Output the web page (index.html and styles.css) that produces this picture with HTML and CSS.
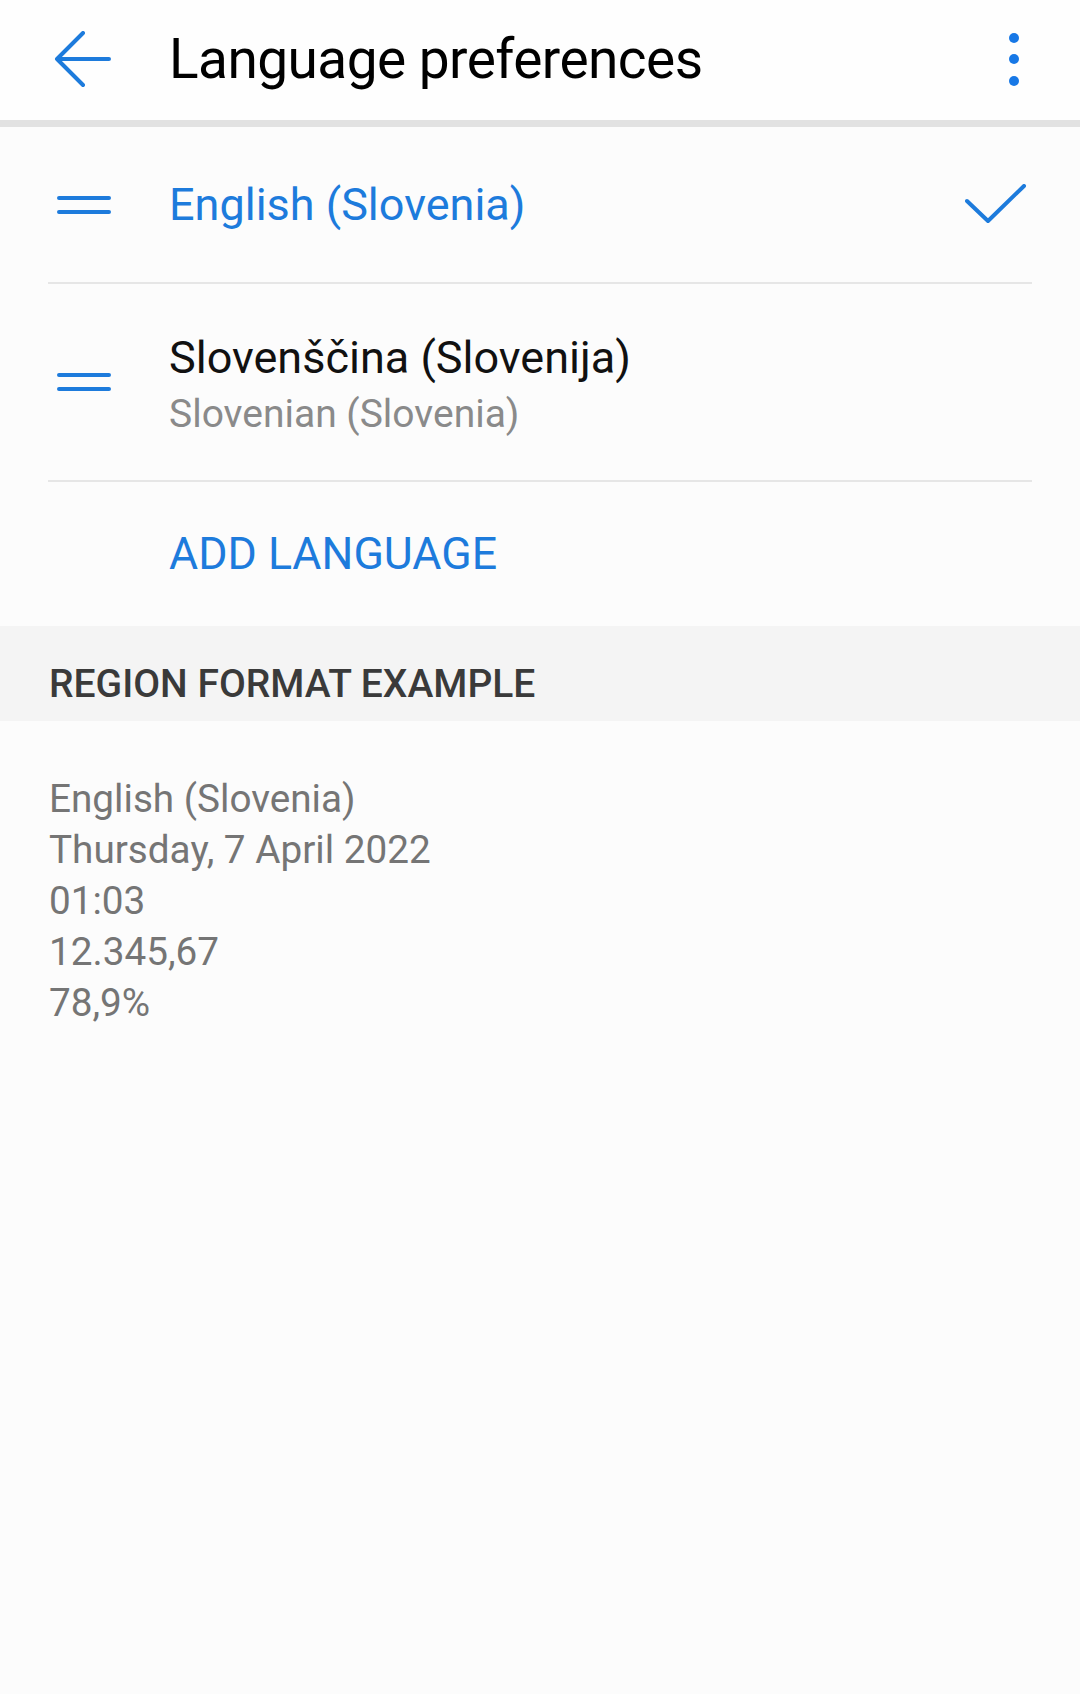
FILE: index.html
```html
<!DOCTYPE html>
<html lang="en">
<head>
<meta charset="utf-8">
<title>Language preferences</title>
<link rel="stylesheet" href="styles.css">
</head>
<body>
<header class="appbar">
  <svg class="back" width="60" height="58" viewBox="0 0 60 58" aria-hidden="true">
    <path d="M31 2 L5 28 L31 54 M5 28 L57 28" fill="none" stroke="#1d7bdc" stroke-width="4" stroke-linecap="round" stroke-linejoin="round"/>
  </svg>
  <h1 class="title">Language preferences</h1>
  <svg class="more" width="20" height="60" viewBox="0 0 20 60" aria-hidden="true">
    <circle cx="10" cy="8" r="5" fill="#1778e6"/>
    <circle cx="10" cy="29" r="5" fill="#1778e6"/>
    <circle cx="10" cy="51" r="5" fill="#1778e6"/>
  </svg>
</header>

<section class="list">
  <div class="row row-one">
    <svg class="drag" width="54" height="18" viewBox="0 0 54 18" aria-hidden="true">
      <path d="M2 2 H52 M2 16 H52" stroke="#1d7bdc" stroke-width="4" stroke-linecap="round"/>
    </svg>
    <div class="lang lang-active">English (Slovenia)</div>
    <svg class="check" width="62" height="40" viewBox="0 0 62 40" aria-hidden="true">
      <path d="M2 17 L23 37 L59 2" fill="none" stroke="#1d7bdc" stroke-width="4" stroke-linecap="round" stroke-linejoin="round"/>
    </svg>
  </div>
  <div class="row row-two">
    <svg class="drag" width="54" height="18" viewBox="0 0 54 18" aria-hidden="true">
      <path d="M2 2 H52 M2 16 H52" stroke="#1d7bdc" stroke-width="4" stroke-linecap="round"/>
    </svg>
    <div class="lang-block">
      <div class="lang">Slovenščina (Slovenija)</div>
      <div class="lang-sub">Slovenian (Slovenia)</div>
    </div>
  </div>
  <div class="add-row">
    <span class="add">ADD LANGUAGE</span>
  </div>
</section>

<div class="section-head">REGION FORMAT EXAMPLE</div>

<div class="examples">
  <div>English (Slovenia)</div>
  <div>Thursday, 7 April 2022</div>
  <div>01:03</div>
  <div>12.345,67</div>
  <div>78,9%</div>
</div>
</body>
</html>
```

FILE: styles.css
```css
html, body {
  margin: 0;
  padding: 0;
}
body {
  background: #fcfcfc;
  font-family: Roboto, "Noto Sans", "Liberation Sans", sans-serif;
  width: 1080px;
  min-height: 1694px;
}

.appbar {
  display: flex;
  align-items: center;
  height: 120px;
  padding: 0 56px 0 52px;
  background: #fefefe;
  border-bottom: 7px solid #e2e2e2;
  box-sizing: content-box;
}
.back {
  flex: none;
  display: block;
}
.title {
  margin: 0 0 0 57px;
  padding-bottom: 3px;
  font-size: 55px;
  font-weight: 400;
  color: #000;
  letter-spacing: -0.55px;
}
.more {
  flex: none;
  display: block;
  margin-left: auto;
}

.list {
  padding: 0 48px;
}
.row {
  display: flex;
  align-items: center;
  border-bottom: 2px solid #e6e6e6;
}
.row-one {
  height: 155px;
}
.row-two {
  height: 196px;
}
.drag {
  flex: none;
  display: block;
  margin-left: 9px;
  margin-right: 58px;
}
.lang {
  font-size: 45px;
  line-height: 54px;
  color: #111;
}
.lang-active {
  color: #1d7bdc;
}
.check {
  flex: none;
  display: block;
  margin-left: auto;
  margin-right: 5px;
  margin-top: -2px;
}
.lang-block {
  padding-top: 9px;
}
.lang-sub {
  font-size: 39px;
  line-height: 58px;
  color: #8a8a8a;
}
.add-row {
  display: flex;
  align-items: center;
  height: 144px;
  padding-left: 121px;
}
.add {
  font-size: 44.7px;
  color: #1d7bdc;
}

.section-head {
  height: 95px;
  box-sizing: border-box;
  padding: 35px 0 13px 49px;
  background: #f4f4f4;
  font-size: 39px;
  line-height: 47px;
  font-weight: 500;
  color: #3a3a3a;
}

.examples {
  padding: 52px 0 0 49px;
  font-size: 38.7px;
  line-height: 51px;
  color: #757575;
}
```
